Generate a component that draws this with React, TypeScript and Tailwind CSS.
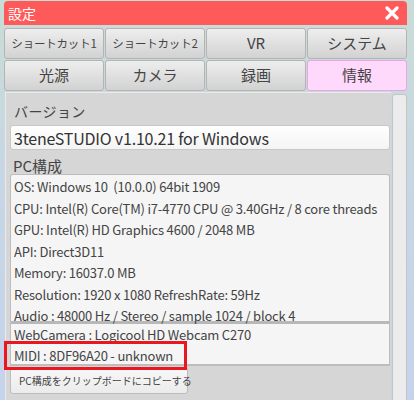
import React from 'react';

const font = { fontFamily: '"Noto Sans CJK JP", "Noto Sans", sans-serif' };

const tabs1 = ['ショートカット1', 'ショートカット2', 'VR', 'システム'];
const tabs2 = ['光源', 'カメラ', '録画', '情報'];

const infoLines = [
    'OS: Windows 10  (10.0.0) 64bit 1909',
    'CPU: Intel(R) Core(TM) i7-4770 CPU @ 3.40GHz / 8 core threads',
    'GPU: Intel(R) HD Graphics 4600 / 2048 MB',
    'API: Direct3D11',
    'Memory: 16037.0 MB',
    'Resolution: 1920 x 1080 RefreshRate: 59Hz',
    'Audio : 48000 Hz / Stereo / sample 1024 / block 4',
];

const Tab: React.FC<{ label: string; active?: boolean; small?: boolean }> = ({ label, active, small }) => (
    <div
        className={
            'h-[31px] flex items-center justify-center rounded-[3px] border text-[#444] whitespace-nowrap ' +
            (small ? 'text-[11.5px] tracking-[-0.2px] ' : 'text-[15px] ') +
            (active
                ? 'bg-[#ffd9fb] border-[#e6a6df]'
                : 'bg-gradient-to-b from-[#eeeeee] to-[#d2d2d2] border-[#b4b4b4]')
        }
    >
        {label}
    </div>
);

export default function App() {
    return (
        <div
            className="w-[414px] h-[400px] overflow-hidden bg-gradient-to-b from-[#cadcd6] via-[#c7d6e6] to-[#c6d3ec]"
            style={font}
        >
            <div className="ml-[4px] w-[403px] pt-[1px] flex flex-col">
                {/* title bar */}
                <div className="h-[24px] bg-[#ff5a5a] rounded-t-[4px] flex items-center justify-between pl-[4px] pr-[8px]">
                    <span className="text-white text-[14px] leading-none">設定</span>
                    <svg width="14" height="14" viewBox="0 0 14 14">
                        <path d="M2 2 L12 12 M12 2 L2 12" stroke="white" strokeWidth="3.2" strokeLinecap="round" />
                    </svg>
                </div>

                {/* tabs */}
                <div className="grid grid-cols-4 gap-x-[1px] mt-[3px]">
                    {tabs1.map((t, i) => (
                        <Tab key={t} label={t} small={i < 2} />
                    ))}
                </div>
                <div className="grid grid-cols-4 gap-x-[1px] mt-[1px]">
                    {tabs2.map((t, i) => (
                        <Tab key={t} label={t} active={i === 3} />
                    ))}
                </div>

                {/* content */}
                <div className="flex mt-[1px] h-[310px]">
                    <div className="w-[388px] ml-[1px] bg-[#d6d6d6] border-t border-l border-[#eaeaea] pl-[4px] pr-[1px] pt-[8px] relative">
                        <div className="text-[14px] leading-[20px] tracking-[0.4px] text-[#444] pl-[4px]">バージョン</div>
                        <div className="mt-[4px] h-[25px] bg-gradient-to-b from-white to-[#f4f4f4] border border-[#c8c8c8] rounded-[3px] flex items-center pl-[3px] text-[16px] tracking-[-0.2px] text-[#333] whitespace-nowrap">
                            3teneSTUDIO v1.10.21 for Windows
                        </div>
                        <div className="mt-[7px] text-[15px] leading-[17px] text-[#444] pl-[3px]">PC構成</div>
                        <div className="h-[150px] bg-[#f5f5f5] border border-[#bdbdbd] border-b-[3px] border-b-[#b8b8b8] rounded-t-[3px] pl-[3px] pt-[1px]">
                            {infoLines.map((l) => (
                                <div key={l} className="h-[21.5px] flex items-center text-[13px] text-[#444] whitespace-pre tracking-[-0.2px]">
                                    {l}
                                </div>
                            ))}
                        </div>
                        <div className="h-[42px] bg-[#f5f5f5] border border-[#bdbdbd] border-t-0 border-b-[2px] pl-[3px]">
                            <div className="h-[21px] flex items-center text-[13px] text-[#444] tracking-[-0.2px]">
                                WebCamera : Logicool HD Webcam C270
                            </div>
                            <div className="h-[21px] flex items-center text-[13px] text-[#444] tracking-[-0.2px]">
                                MIDI : 8DF96A20 - unknown
                            </div>
                        </div>
                        <div className="mt-[1px] w-[178px] h-[27px] bg-gradient-to-b from-[#f8f8f8] to-[#ebebeb] border border-[#bdbdbd] rounded-[3px] flex items-center pl-[8px] text-[10px] text-[#444] whitespace-nowrap">
                            PC構成をクリップボードにコピーする
                        </div>
                        {/* highlight */}
                        <div className="absolute left-[-2px] top-[248px] w-[183px] h-[29px] border-[3px] border-[#ea1620]" />
                    </div>
                    <div className="w-[15px] ml-[1px] bg-[#ececec] border border-[#c4c4c4] rounded-t-[3px] mt-[2px]" />
                </div>
            </div>
        </div>
    );
}
